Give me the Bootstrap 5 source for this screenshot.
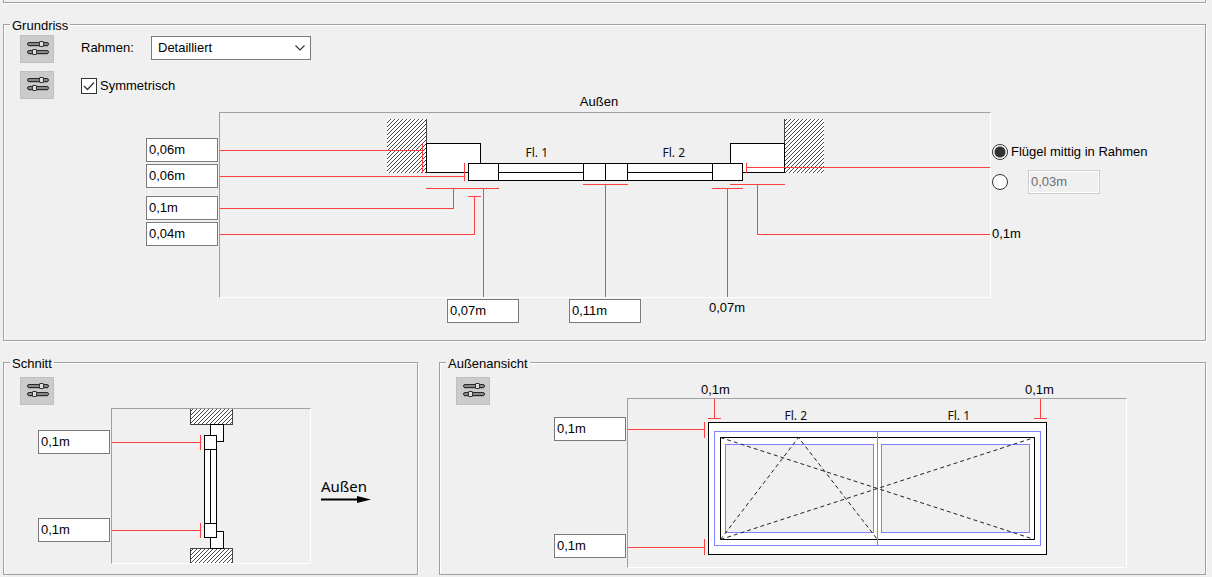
<!DOCTYPE html>
<html lang="de">
<head>
<meta charset="utf-8">
<meta name="viewport" content="width=device-width, initial-scale=1">
<title>Fenster</title>
<link rel="stylesheet" href="https://cdn.jsdelivr.net/npm/bootstrap@5.3.0/dist/css/bootstrap.min.css">
<style>
  body { background: #f0f0f0; color: #000; font: 13px/18px "Liberation Sans", Arial, sans-serif; }
  main { padding: 0 6px 0 3px; }
  .etched { border: 1px solid #a0a0a0; box-shadow: 1px 1px 0 #fff, inset 1px 1px 0 #fff; }
  .group { padding: 0 6px; }
  .group > legend { font-size: 13px; line-height: 15px; padding: 2px 2px 0; background: #f0f0f0; }
  .previous { height: 3px; border-top: 0; box-shadow: 1px 1px 0 #fff; }
  .stacked { margin-top: 13px; }
  .inner { padding: 2px 0 0 10px; }
  .inner-low { padding: 6px 0 0 10px; }
  .lower { display: grid; grid-template-columns: minmax(415px, 35fr) 65fr; column-gap: 21px; }

  .tool { width: 34px; height: 28px; padding: 0; border: 1px solid #bfbfbf; border-radius: 0; background: #cbcbcb; flex: none; line-height: 0; }
  .tool:hover { background: #d8d8d8; }
  .option-row { column-gap: 27px; }
  .option-label { width: 70px; }
  .option-choice { padding-bottom: 2px; }
  .option-check { padding-top: 2px; column-gap: 3px; }

  .field { width: 72px; height: 24px; padding: 0 2px 2px; border: 1px solid #7a7a7a; border-radius: 0; background: #fff; color: #000; font-size: 13px; line-height: 18px; min-height: 0; }
  .field:disabled { background: #f0f0f0; border-color: #ccc; box-shadow: inset 0 0 0 1px #fff; color: #6d6d6d; opacity: 1; }
  .combo { width: 160px; height: 24px; min-height: 0; padding: 0 24px 0 6px; border: 1px solid #7a7a7a; border-radius: 0; color: #000; font-size: 13px; line-height: 22px;
    background: #fff url("data:image/svg+xml,%3Csvg xmlns='http://www.w3.org/2000/svg' width='10' height='6'%3E%3Cpath d='M.5.5L5 5 9.500.5' fill='none' stroke='%23333' stroke-width='1.200'/%3E%3C/svg%3E") no-repeat right 5px center / 10px 6px; }
  .tick, .dot { appearance: none; width: 16px; height: 16px; margin: 0; border: 1px solid #333; background: #fff; flex: none; }
  .tick:checked { background: #fff url("data:image/svg+xml,%3Csvg xmlns='http://www.w3.org/2000/svg' width='14' height='14'%3E%3Cpath d='M2 7l3.500 3.500L12 3.500' fill='none' stroke='%23333' stroke-width='1.300'/%3E%3C/svg%3E") center no-repeat; }
  .dot { border-radius: 50%; }
  .dot:checked { background: radial-gradient(circle, #333 5px, #fff 6px); }

  .canvas { border: 1px solid; border-color: #a0a0a0 #fff #fff #a0a0a0; }
  .canvas svg, .arrow { display: block; }
  .ink { fill: #fff; stroke: #000; }
  .wall { stroke: #444; fill: none; }
  .dim { fill: none; stroke: #ff4040; }
  .blue { fill: none; stroke: #8080ff; }
  .pane { fill: #f0f0f0; stroke: #8080ff; }
  .swing { fill: none; stroke: #222; stroke-dasharray: 4 3; shape-rendering: auto; }
  .plan-text { font: 12px "Noto Sans", "Open Sans", sans-serif; fill: #111; }

  .plan { display: grid; grid-template-columns: 72px 772px 1fr; column-gap: 1px; padding: 0 0 17px 126px; margin-top: -7px; }
  .plan-title { grid-column: 2; padding-right: 12px; line-height: 20px; }
  .plan-left { padding-top: 26px; row-gap: 2px; }
  .plan-left .spaced { margin-top: 6px; }
  .plan-right { padding-top: 28px; row-gap: 6px; }
  .plan-right > div { height: 24px; column-gap: 3px; }
  .plan-right .sum { margin-top: 22px; line-height: 24px; }
  .offset-field { margin-left: 17px; }
  .plan-bottom { grid-column: 2; padding: 1px 0 0 228px; column-gap: 50px; }
  .plan-bottom span { margin-left: 18px; }

  .cut { padding: 0 0 10px 18px; margin-top: 3px; column-gap: 1px; }
  .cut-fields { padding-top: 22px; row-gap: 64px; }
  .cut-side { padding: 68px 0 0 9px; font: 15px/20px "Noto Sans", "Open Sans", sans-serif; }

  .view { padding-bottom: 6px; }
  .view-fields { padding: 40px 1px 0 64px; row-gap: 93px; }
  .view-top { height: 21px; padding: 4px 0 0 74px; column-gap: 294px; line-height: 17px; }
  .view-top span { width: 30px; }
</style>
</head>
<body>
<svg class="position-absolute" width="0" height="0" aria-hidden="true">
  <defs>
    <pattern id="hatch" x=".5" y=".5" width="4" height="4" patternUnits="userSpaceOnUse">
      <path fill="#fff" d="M0 0h4v4H0z"/>
      <path fill="#444" d="M3 0h1v1H3zM2 1h1v1H2zM1 2h1v1H1zM0 3h1v1H0z"/>
    </pattern>
    <symbol id="sliders" viewBox="0 0 32 26">
      <path d="M7 10.500h20M7 18.500h20" stroke="#aaa"/>
      <rect x="6.500" y="6.500" width="21" height="3" rx="1.500" fill="#888" stroke="#2a2a2a"/>
      <rect x="6.500" y="14.500" width="21" height="3" rx="1.500" fill="#888" stroke="#2a2a2a"/>
      <rect x="18.500" y="5.500" width="4" height="5" rx=".5" fill="#ddd" stroke="#333"/>
      <rect x="11.500" y="13.500" width="4" height="5" rx=".5" fill="#ddd" stroke="#333"/>
    </symbol>
  </defs>
</svg>
<main>
  <div class="etched previous"></div>

  <fieldset class="group etched stacked">
    <legend class="float-none w-auto mb-0">Grundriss</legend>
    <div class="inner">
      <div class="d-flex flex-column gap-2">
        <div class="option-row d-flex">
          <button type="button" class="tool btn" aria-label="Rahmen einstellen"><svg width="32" height="26"><use href="#sliders"/></svg></button>
          <div class="option-choice d-flex align-items-center">
            <label class="option-label" for="rahmen">Rahmen:</label>
            <select class="combo form-select" id="rahmen"><option>Detailliert</option><option>Einfach</option></select>
          </div>
        </div>
        <div class="option-row d-flex">
          <button type="button" class="tool btn" aria-label="Symmetrie einstellen"><svg width="32" height="26"><use href="#sliders"/></svg></button>
          <div class="option-check d-flex align-items-center">
            <input class="tick" type="checkbox" id="sym" checked>
            <label for="sym">Symmetrisch</label>
          </div>
        </div>
      </div>

      <div class="plan">
        <div class="plan-title text-center">Außen</div>
        <div></div>
        <div class="plan-left d-flex flex-column">
          <input class="field" type="text" value="0,06m" aria-label="Rahmentiefe">
          <input class="field" type="text" value="0,06m" aria-label="Flügeltiefe">
          <input class="field spaced" type="text" value="0,1m" aria-label="Rahmenbreite">
          <input class="field" type="text" value="0,04m" aria-label="Überlappung">
        </div>
        <div class="canvas">
          <svg width="770" height="184" viewBox="219.500 112.500 770 184" shape-rendering="crispEdges" role="img" aria-label="Grundriss">
            <rect x="386.500" y="118.500" width="40" height="54" fill="url(#hatch)"/>
            <rect x="783.500" y="118.500" width="40" height="54" fill="url(#hatch)"/>
            <path class="wall" d="M426 118.500V143M784 118.500V143"/>
            <rect class="ink" x="426" y="143" width="54" height="29"/>
            <rect class="ink" x="730" y="143" width="54" height="29"/>
            <rect class="ink" x="468" y="163" width="274" height="17"/>
            <path class="ink" d="M498 163v17M583 163v17M605 163v17M627 163v17M712 163v17M498 172h85M627 172h85"/>
            <path class="dim" d="M219 150h203M422 142.500v30M219 176h245M464 162.500v18M425.500 188h73M453 188v20H219M467.500 196h13M474 196v38H219M483 188v109M582.500 184h45M605 184v113M711.500 188h31M727 188v109M729.500 184h55M757 184v50h233M746 162.500v10M746 167h244"/>
            <text class="plan-text" x="525" y="156">Fl. 1</text>
            <text class="plan-text" x="662" y="156">Fl. 2</text>
          </svg>
        </div>
        <div class="plan-right d-flex flex-column">
          <div class="d-flex align-items-center">
            <input class="dot" type="radio" name="lage" id="mittig" checked>
            <label for="mittig">Flügel mittig in Rahmen</label>
          </div>
          <div class="d-flex align-items-center">
            <input class="dot" type="radio" name="lage" id="versatz" aria-label="Versatz">
            <input class="field offset-field" type="text" value="0,03m" aria-label="Versatz des Flügels" disabled>
          </div>
          <div class="sum">0,1m</div>
        </div>
        <div class="plan-bottom d-flex">
          <input class="field" type="text" value="0,07m" aria-label="Flügelrahmenbreite">
          <input class="field" type="text" value="0,11m" aria-label="Mittelbreite">
          <span>0,07m</span>
        </div>
      </div>
    </div>
  </fieldset>

  <div class="lower stacked">
    <fieldset class="group etched">
      <legend class="float-none w-auto mb-0">Schnitt</legend>
      <div class="inner-low">
        <button type="button" class="tool btn d-block" aria-label="Schnitt einstellen"><svg width="32" height="26"><use href="#sliders"/></svg></button>
        <div class="cut d-flex">
          <div class="cut-fields d-flex flex-column">
            <input class="field" type="text" value="0,1m" aria-label="Oben">
            <input class="field" type="text" value="0,1m" aria-label="Unten">
          </div>
          <div class="canvas">
            <svg width="198" height="154" viewBox="111.500 408.500 198 154" shape-rendering="crispEdges" role="img" aria-label="Schnitt">
              <rect x="189.500" y="408.500" width="43" height="16" fill="url(#hatch)"/>
              <rect x="189.500" y="547.500" width="43" height="15" fill="url(#hatch)"/>
              <path class="wall" d="M190 408v16h42v-16M190 563v-15h42v15"/>
              <rect class="ink" x="210" y="424" width="13" height="17"/>
              <rect class="ink" x="210" y="531" width="13" height="17"/>
              <rect class="ink" x="204" y="435" width="12" height="102"/>
              <path class="ink" d="M204 449h12M204 523h12M210 449v74"/>
              <path class="dim" d="M111 442h89M200 434.500v15M111 530h89M200 522.500v15"/>
            </svg>
          </div>
          <div class="cut-side">Außen
            <svg class="arrow" width="50" height="8"><path d="M0 2.500h36V0l14 3.500L36 7V4.500H0z"/></svg>
          </div>
        </div>
      </div>
    </fieldset>

    <fieldset class="group etched">
      <legend class="float-none w-auto mb-0">Außenansicht</legend>
      <div class="view inner-low d-flex">
        <button type="button" class="tool btn" aria-label="Außenansicht einstellen"><svg width="32" height="26"><use href="#sliders"/></svg></button>
        <div class="view-fields d-flex flex-column">
          <input class="field" type="text" value="0,1m" aria-label="Oben">
          <input class="field" type="text" value="0,1m" aria-label="Unten">
        </div>
        <div>
          <div class="view-top d-flex"><span>0,1m</span><span>0,1m</span></div>
          <div class="canvas">
            <svg width="498" height="168" viewBox="627.500 398.500 498 168" shape-rendering="crispEdges" role="img" aria-label="Außenansicht">
              <rect class="ink" x="708" y="422" width="338" height="132"/>
              <rect class="ink" x="720" y="437" width="314" height="102"/>
              <rect class="pane" x="725" y="444" width="148" height="88"/>
              <rect class="pane" x="881" y="444" width="148" height="88"/>
              <path class="blue" d="M714 431h326v114H714zM877 431v114"/>
              <path class="swing" d="M720 437l314 102M720 539l314-102M720 539l78-102 79 102"/>
              <path class="dim" d="M714 398v20M707.500 418h13M1040 398v20M1033.500 418h13M627 429h77M704 421.500v16M627 547h77M704 538.500v16"/>
              <text class="plan-text" x="784" y="419">Fl. 2</text>
              <text class="plan-text" x="947" y="419">Fl. 1</text>
            </svg>
          </div>
        </div>
      </div>
    </fieldset>
  </div>
</main>
<script src="https://cdn.jsdelivr.net/npm/bootstrap@5.3.0/dist/js/bootstrap.bundle.min.js"></script>
</body>
</html>
